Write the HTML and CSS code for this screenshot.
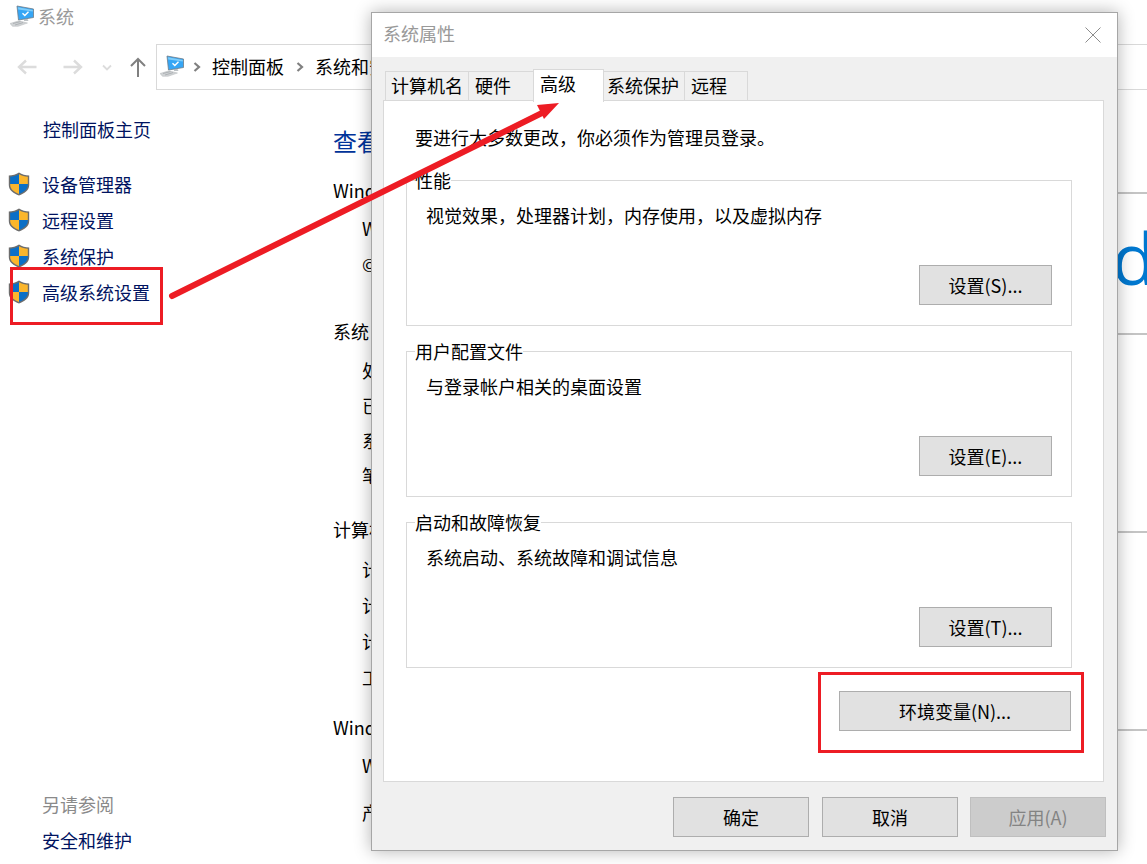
FILE: index.html
```html
<!DOCTYPE html>
<html lang="zh-CN">
<head>
<meta charset="utf-8">
<title>系统</title>
<link rel="stylesheet" href="styles.css">
</head>
<body>
<svg class="defs" width="0" height="0" aria-hidden="true">
  <defs>
    <symbol id="pc" viewBox="0 0 24 22">
      <path d="M7 1 23.500 4v8.500L8.500 15z" fill="#36a6f5" stroke="#6f7c88" stroke-width=".8"/>
      <path d="M8 2.200 22.800 4.900v1.600L8.300 4.500z" fill="#7fcdf9"/>
      <path d="m12.500 8.300 2.300 2.200 3.700-3.800" fill="none" stroke="#fff" stroke-width="1.400"/>
      <path d="M14 14.200h3.500l1 1.600H14z" fill="#a4abb1"/>
      <path d="M0 18.500 9 15.800l8.500 2.200L8 21.300H2.500z" fill="#d0d3d5" stroke="#b4b8bb" stroke-width=".5"/>
      <path d="M3 18.500 10.500 16.600M5 20l8-2.400" stroke="#9da2a6" stroke-width=".7"/>
    </symbol>
    <symbol id="shield" viewBox="0 0 22 24">
      <path d="M11 .6C8 2.700 4.500 3.400 .8 3.400V13c0 5.500 5 8.600 10.200 10.500C16.200 21.600 21.200 18.500 21.200 13V3.400C17.500 3.400 14 2.700 11 .6z" fill="#6d6d6d"/>
      <path d="M11 2.200C8.400 3.900 5.200 4.500 2.200 4.700V12H11z" fill="#0b6fc6"/>
      <path d="M11 2.200C13.600 3.900 16.800 4.500 19.800 4.700V12H11z" fill="#fbb62c"/>
      <path d="M2.200 12H11v9.900C6.500 20.200 2.400 17.600 2.200 13z" fill="#fbb62c"/>
      <path d="M19.800 12H11v9.900C15.500 20.200 19.600 17.600 19.800 13z" fill="#0b6fc6"/>
    </symbol>
    <symbol id="crumb" viewBox="0 0 8 10">
      <path d="M1.500 1 6 5 1.500 9" fill="none" stroke="#808080" stroke-width="2.200"/>
    </symbol>
  </defs>
</svg>

<div class="desktop">
  <header class="titlebar">
    <svg class="pc-icon"><use href="#pc"/></svg>
    <span>系统</span>
  </header>

  <nav class="navbar">
    <div class="nav-buttons">
      <svg class="nav-arrow" viewBox="0 0 20 16"><path d="M19.500 8H2M9 1.500 2 8l7 6.500" fill="none" stroke="#dcdcdc" stroke-width="2.400"/></svg>
      <svg class="nav-arrow forward" viewBox="0 0 20 16"><path d="M.5 8H18M11 1.500 18 8l-7 6.500" fill="none" stroke="#dcdcdc" stroke-width="2.400"/></svg>
      <svg class="nav-drop" viewBox="0 0 10 7"><path d="M1 1.500 5 5.500l4-4" fill="none" stroke="#dcdcdc" stroke-width="1.800"/></svg>
      <svg class="nav-up" viewBox="0 0 16 20"><path d="M8 20V2M1 9l7-7 7 7" fill="none" stroke="#808080" stroke-width="2"/></svg>
    </div>
    <div class="address">
      <svg class="pc-icon small"><use href="#pc"/></svg>
      <svg class="crumb"><use href="#crumb"/></svg>
      <span>控制面板</span>
      <svg class="crumb"><use href="#crumb"/></svg>
      <span>系统和安全</span>
    </div>
  </nav>

  <div class="content">
    <aside class="sidebar">
      <a class="home">控制面板主页</a>
      <ul class="tasks">
        <li><svg class="shield"><use href="#shield"/></svg><a>设备管理器</a></li>
        <li><svg class="shield"><use href="#shield"/></svg><a>远程设置</a></li>
        <li><svg class="shield"><use href="#shield"/></svg><a>系统保护</a></li>
        <li><svg class="shield"><use href="#shield"/></svg><a>高级系统设置</a></li>
      </ul>
      <div class="see-also">
        <p>另请参阅</p>
        <a>安全和维护</a>
      </div>
    </aside>

    <main class="main">
      <h1>查看有关计算机的基本信息</h1>
      <section class="sec sec-edition">
        <h2>Windows 版本</h2>
        <div class="edition">
          <div class="edition-text">
            <p>Windows 10 家庭中文版</p>
            <p>© 2018 Microsoft Corporation</p>
          </div>
          <div class="logo">Windows</div>
        </div>
      </section>
      <section class="sec sec-system">
        <h2>系统</h2>
        <p>处理器&#xFF1A;</p>
        <p>已安装的内存(RAM)&#xFF1A;</p>
        <p>系统类型&#xFF1A;</p>
        <p>笔和触控&#xFF1A;</p>
      </section>
      <section class="sec sec-name">
        <h2>计算机名、域和工作组设置</h2>
        <p>计算机名&#xFF1A;</p>
        <p>计算机全名&#xFF1A;</p>
        <p>计算机描述&#xFF1A;</p>
        <p>工作组&#xFF1A;</p>
      </section>
      <section class="sec sec-activate">
        <h2>Windows 激活</h2>
        <p>Windows 已激活</p>
        <p class="product">产品 ID&#xFF1A;</p>
      </section>
    </main>
  </div>

  <div class="dialog">
    <div class="dialog-title">
      <span>系统属性</span>
      <svg class="close" viewBox="0 0 16 16"><path d="M.5.5l15 15M15.500.5l-15 15" stroke="#8c8c8c" stroke-width="1" fill="none"/></svg>
    </div>
    <div class="dialog-body">
      <div class="tabs">
        <div class="tab t1">计算机名</div>
        <div class="tab t2">硬件</div>
        <div class="tab t3 active">高级</div>
        <div class="tab t4">系统保护</div>
        <div class="tab t5">远程</div>
      </div>
      <div class="panel">
        <p class="notice">要进行大多数更改&#xFF0C;你必须作为管理员登录。</p>
        <fieldset class="group">
          <legend>性能</legend>
          <p>视觉效果&#xFF0C;处理器计划&#xFF0C;内存使用&#xFF0C;以及虚拟内存</p>
          <div class="group-actions"><button class="btn">设置(S)...</button></div>
        </fieldset>
        <fieldset class="group">
          <legend>用户配置文件</legend>
          <p>与登录帐户相关的桌面设置</p>
          <div class="group-actions"><button class="btn">设置(E)...</button></div>
        </fieldset>
        <fieldset class="group">
          <legend>启动和故障恢复</legend>
          <p>系统启动、系统故障和调试信息</p>
          <div class="group-actions"><button class="btn">设置(T)...</button></div>
        </fieldset>
        <div class="env-row"><button class="btn env">环境变量(N)...</button></div>
      </div>
      <div class="dialog-actions">
        <button class="btn wide">确定</button>
        <button class="btn wide">取消</button>
        <button class="btn wide disabled">应用(A)</button>
      </div>
    </div>
  </div>

  <div class="mark mark-task"></div>
  <div class="mark mark-env"></div>
  <svg class="arrow" viewBox="0 0 1147 864">
    <path d="M172 296 546 111" stroke="#ed1c24" stroke-width="6" stroke-linecap="round" fill="none"/>
    <path d="M559 103 537 105 544 119z" fill="#ed1c24"/>
  </svg>
</div>
</body>
</html>
```

FILE: styles.css
```css
* { box-sizing: border-box; }
html, body { margin: 0; padding: 0; background: #fff; }
body {
  font-family: "Noto Sans CJK SC", "Open Sans", sans-serif;
  font-size: 18px;
  line-height: 26px;
  color: #000;
}
p, h1, h2, ul { margin: 0; padding: 0; font-weight: 400; }
ul { list-style: none; }
.defs { position: absolute; }

.desktop {
  position: relative;
  width: 1147px;
  height: 864px;
  overflow: hidden;
  background: #fff;
}

/* title */
.titlebar {
  display: flex;
  align-items: center;
  height: 32px;
  padding-left: 10px;
  color: #999;
}
.pc-icon { width: 24px; height: 22px; margin-right: 4px; flex: none; }
.pc-icon.small { margin-right: 9px; }

/* nav */
.navbar {
  display: flex;
  align-items: center;
  height: 46px;
  margin-top: 12px;
  padding-left: 17px;
}
.nav-buttons { display: flex; align-items: center; width: 139px; flex: none; }
.nav-arrow { width: 20px; height: 16px; }
.nav-arrow.forward { margin-left: 26px; }
.nav-drop { width: 10px; height: 7px; margin-left: 19px; }
.nav-up { width: 16px; height: 20px; margin-left: 18px; }
.address {
  display: flex;
  align-items: center;
  flex: none;
  width: 1100px;
  height: 46px;
  padding: 0 0 2px 3px;
  border: 1px solid #d9d9d9;
}
.crumb { width: 8px; height: 10px; flex: none; margin-right: 11px; margin-top: 2px; }
.address span { margin-right: 12px; }

/* content */
.content { display: flex; }
.sidebar {
  flex: none;
  width: 333px;
  height: 774px;
  padding-top: 26px;
  display: flex;
  flex-direction: column;
  color: #00135f;
}
.home { margin-left: 43px; line-height: 26px; }
.tasks { margin-top: 24px; }
.tasks li {
  display: flex;
  align-items: center;
  height: 36px;
  padding-left: 8px;
}
.shield { width: 22px; height: 24px; margin-right: 12px; flex: none; }
.see-also { margin-top: auto; padding: 0 0 6px 42px; }
.see-also p { color: #8a8a8a; height: 36px; line-height: 36px; }
.see-also a { display: block; height: 36px; line-height: 36px; }

.main { flex: 1; min-width: 0; padding-top: 34px; }
.main h1 { font-size: 24px; line-height: 34px; color: #003399; }
.main h2 {
  display: flex;
  align-items: center;
  font-size: 18px;
  line-height: 26px;
  white-space: nowrap;
}
.main h2::after {
  content: "";
  flex: 1;
  margin-left: 10px;
  margin-top: 6px;
  border-top: 2px solid #c4c4c4;
}
.sec p { margin-left: 29px; height: 36px; line-height: 36px; white-space: nowrap; }
.sec-edition { margin-top: 19px; }
.sec-system { margin-top: 21px; }
.sec-system p { height: 35px; line-height: 35px; }
.sec-name { margin-top: 23px; }
.sec-activate { margin-top: 19px; }
.sec-edition h2 + .edition { margin-top: 7px; }
.sec-system h2 + p, .sec-name h2 + p { margin-top: 9px; }
.sec-activate h2 + p { margin-top: 7px; }
.sec .product { margin-top: 11px; }
.edition { display: flex; }
.edition-text { flex: 0 0 650px; }
.logo {
  font-family: "Open Sans", sans-serif;
  font-size: 72px;
  line-height: 80px;
  margin-top: 7px;
  color: #0078d0;
  white-space: nowrap;
}

/* dialog */
.dialog {
  position: absolute;
  left: 371px;
  top: 12px;
  width: 747px;
  height: 839px;
  border: 1px solid #a6a6a6;
  background: #f0f0f0;
  box-shadow: 0 0 16px rgba(0, 0, 0, .3);
  display: flex;
  flex-direction: column;
}
.dialog-title {
  flex: none;
  height: 44px;
  background: #fff;
  display: flex;
  align-items: center;
  justify-content: space-between;
  padding: 0 16px 4px 11px;
  color: #999;
}
.close { width: 16px; height: 16px; margin-top: 4px; }
.dialog-body { flex: 1; padding: 14px 13px 0 11px; }
.tabs { display: flex; height: 29px; position: relative; }
.tab {
  height: 29px;
  margin-left: -1px;
  border: 1px solid #d9d9d9;
  border-bottom: 0;
  padding-left: 6px;
  line-height: 26px;
  background: #f0f0f0;
}
.t1 { width: 84px; margin-left: 2px; padding-left: 5px; }
.t2 { width: 66px; }
.t4 { width: 82px; padding-left: 3px; }
.t5 { width: 64px; }
.tab.active {
  position: relative;
  z-index: 1;
  width: 71px;
  height: 33px;
  margin-top: -2px;
  background: #fff;
  line-height: 27px;
}
.panel {
  position: relative;
  height: 682px;
  background: #fff;
  border: 1px solid #d9d9d9;
  padding: 23px 31px 0 22px;
}
.notice { margin-left: 9px; height: 26px; }
.group {
  margin: 15px 0 0;
  padding: 0;
  min-width: 0;
  height: 156px;
  border: 1px solid #d9d9d9;
  display: block;
}
.notice + .group { margin-top: 20px; }
.group legend {
  margin-left: 8px;
  padding: 0;
  font-size: 18px;
  line-height: 20px;
  height: 20px;
}
.group p { margin: 12px 0 0 19px; height: 26px; }
.group-actions { display: flex; justify-content: flex-end; margin-top: 37px; padding-right: 19px; }
.btn {
  font: inherit;
  line-height: 26px;
  height: 40px;
  width: 133px;
  padding: 0;
  border: 1px solid #adadad;
  background: #e1e1e1;
  color: #000;
}
.env-row { display: flex; justify-content: flex-end; margin-top: 23px; padding-right: 1px; }
.btn.env { width: 232px; }
.dialog-actions {
  display: flex;
  justify-content: flex-end;
  gap: 13px;
  margin: 15px -2px 0 0;
}
.btn.wide { width: 136px; }
.btn.disabled { margin-left: -1px; background: #ccc; border-color: #bfbfbf; color: #838383; }

/* annotations */
.mark { position: absolute; border: 3px solid #ed1c24; }
.mark-task { left: 10px; top: 267px; width: 153px; height: 58px; }
.mark-env { left: 818px; top: 672px; width: 266px; height: 81px; }
.arrow { position: absolute; left: 0; top: 0; width: 1147px; height: 864px; pointer-events: none; }
```
